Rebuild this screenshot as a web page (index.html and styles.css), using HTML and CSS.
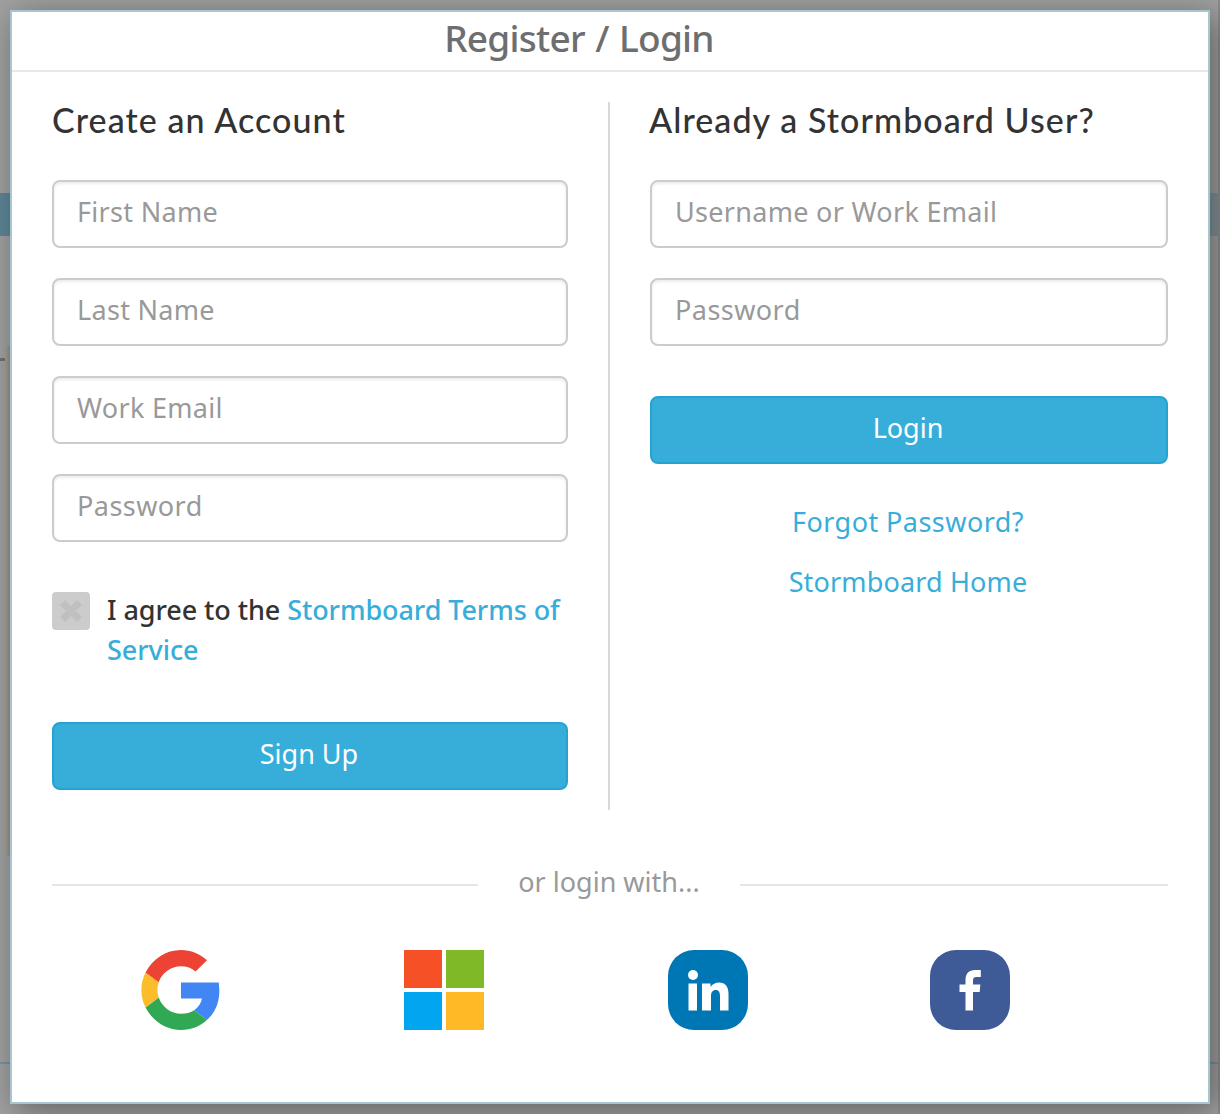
FILE: index.html
```html
<!DOCTYPE html>
<html lang="en">
<head>
<meta charset="utf-8">
<title>Register / Login</title>
<link rel="stylesheet" href="styles.css">
</head>
<body>
<div class="backdrop" aria-hidden="true">
  <div class="backdrop-top"></div>
  <div class="backdrop-bar"></div>
  <div class="backdrop-main"><div class="backdrop-mark"></div></div>
  <div class="backdrop-foot"></div>
</div>
<div class="dialog" role="dialog">
  <header class="dialog-header"><h1 class="dialog-title">Register / Login</h1></header>
  <div class="columns">
    <form class="column register">
      <h2 class="heading heading-register">Create an Account</h2>
      <div class="fields">
        <input class="field first" type="text" placeholder="First Name">
        <input class="field last" type="text" placeholder="Last Name">
        <input class="field email" type="text" placeholder="Work Email">
        <input class="field" type="password" placeholder="Password">
      </div>
      <div class="agree">
        <span class="checkbox"><svg width="24" height="24" viewBox="0 0 24 24"><path d="M3.500 3.500 20.500 20.500M20.500 3.500 3.500 20.500" stroke="#c0c0c0" stroke-width="7"/></svg></span>
        <p class="terms"><span class="terms-lead">I agree to the</span> <a class="link">Stormboard Terms of</a><br><a class="link service">Service</a></p>
      </div>
      <button class="button" type="button">Sign Up</button>
    </form>
    <form class="column login">
      <h2 class="heading heading-login">Already a Stormboard User?</h2>
      <div class="fields">
        <input class="field user" type="text" placeholder="Username or Work Email">
        <input class="field" type="password" placeholder="Password">
      </div>
      <button class="button button-login" type="button">Login</button>
      <nav class="links"><a class="link forgot">Forgot Password?</a><a class="link home">Stormboard Home</a></nav>
    </form>
  </div>
  <div class="separator"><span class="separator-text">or login with...</span></div>
  <div class="providers">
    <svg width="80" height="80" viewBox="1 0 80 80" aria-label="Google">
      <path fill="#4285f4" d="M41 32.500H78.700C80.500 44.500 79 59.500 66.900 70L54.200 60.200C58.500 57.300 61 53.500 62 48.600H41Z"/>
      <path fill="#31a853" d="M66.900 70C60 76.500 51 80 41 80C25.800 80 12.600 71 5.500 57.500L18.700 47.500C22 57 31 63.800 41 63.800C46 63.800 50.700 62.500 54.200 60.200Z"/>
      <path fill="#fbbd2c" d="M5.500 57.500C0 46.500 0 33.500 5.500 22.500L18.700 32.300C17 37.500 17 42.500 18.700 47.500Z"/>
      <path fill="#ec4335" d="M5.500 22.500C12.600 9 25.800 0 41 0C51 0 60 4 67 10.200L55.600 21.600C51.800 18 46.500 16.200 41 16.200C31 16.200 22 22.500 18.700 32.300Z"/>
    </svg>
    <svg width="80" height="80" viewBox="0 0 80 80" aria-label="Microsoft">
      <path fill="#f65026" d="M0 0H38V38H0Z"/><path fill="#80b928" d="M42 0H80V38H42Z"/>
      <path fill="#02a5ef" d="M0 42H38V80H0Z"/><path fill="#ffb927" d="M42 42H80V80H42Z"/>
    </svg>
    <svg width="80" height="80" viewBox="0 0 80 80" aria-label="LinkedIn">
      <rect width="80" height="80" rx="26" fill="#0077b5"/>
      <circle cx="25" cy="25" r="5" fill="#fff"/>
      <path fill="#fff" d="M20.500 33.500H29V60.500H20.500ZM34 33.500H42.500V37C44.500 34 47.500 32.500 51 32.500C57.500 32.500 60.500 37 60.500 43.500V60.500H52V46.500C52 42.500 51 40 47.800 40C44.500 40 43 42.500 43 46V60.500H34Z"/>
    </svg>
    <svg width="80" height="80" viewBox="0 0 80 80" aria-label="Facebook">
      <rect width="80" height="80" rx="26" fill="#3e5b98"/>
      <path fill="#fff" d="M35.500 60.500V42H29.500V34.500H35.500V30C35.500 23.500 39 20 45 20H50.800V27H46.500C44 27 43 28 43 30.500V34.500H50.300L49.700 42H43V60.500Z"/>
    </svg>
  </div>
</div>
</body>
</html>
```
FILE: styles.css
```css
* { box-sizing: border-box; }
body {
  margin: 0;
  height: 1114px;
  overflow: hidden;
  position: relative;
  font-family: "Noto Sans", sans-serif;
  font-size: 27px;
  color: #333;
}
.backdrop {
  height: 1114px;
  background: #a0a0a0;
  border-right: 2px solid #8c8c8c;
  display: flex;
  flex-direction: column;
}
.backdrop-top { height: 193px; }
.backdrop-bar { height: 43px; background: linear-gradient(90deg, #5d8696 50%, #82939a 50%); }
.backdrop-main {
  height: 826px;
  padding-top: 122px;
  background: linear-gradient(90deg, transparent 5px, #9b9484 9px, #9b9484 12px, transparent 13px) 0 110px / 100% 510px no-repeat;
}
.backdrop-mark { width: 5px; height: 3px; background: #6f6f6f; }
.backdrop-foot { flex: 1; border-top: 2px solid #7494a1; }
.dialog {
  position: absolute;
  inset: 10px;
  border: 2px solid #a8c6d1;
  background: #fff;
  box-shadow: 6px 6px 30px rgba(0, 0, 0, .4);
}
.dialog-header {
  height: 60px;
  padding-right: 62px;
  border-bottom: 2px solid #e8e8e8;
  text-align: center;
}
.dialog-title {
  margin: 0;
  font-size: 37px;
  line-height: 52px;
  font-weight: 500;
  letter-spacing: -.75px;
  word-spacing: 1.5px;
  color: #6d6e70;
}
.columns { display: flex; margin: 30px 40px 0; height: 708px; }
.column { display: flex; flex-direction: column; }
.register { width: 558px; padding-right: 40px; border-right: 2px solid #d3d9dd; }
.login { width: 558px; padding-left: 40px; }
.heading {
  margin: -1px 0 41px;
  height: 38px;
  font-family: Lato, sans-serif;
  font-size: 34px;
  line-height: 38px;
  font-weight: 500;
  letter-spacing: 1.08px;
  white-space: nowrap;
}
.heading-login { text-indent: -1px; }
.fields { display: grid; gap: 30px; }
.field {
  width: 100%;
  height: 68px;
  padding: 0 23px 6px;
  border: 2px solid #ccc;
  border-radius: 8px;
  background: #fff;
  box-shadow: inset 0 2px 3px rgba(0, 0, 0, .08);
  font: inherit;
  letter-spacing: .3px;
}
.field[type="password"] { letter-spacing: .45px; }
.field::placeholder { color: #999; opacity: 1; }
.agree { display: flex; gap: 17px; height: 88px; margin: 50px 0 42px; }
.checkbox {
  display: grid;
  place-items: center;
  width: 38px;
  height: 38px;
  border-radius: 4px;
  background: #ccc;
}
.terms { margin: -2px 0 0; line-height: 40px; font-weight: 500; letter-spacing: -.08px; white-space: nowrap; }
.link { color: #37aeda; }
.button {
  height: 68px;
  padding: 0 2px 6px 0;
  border: 2px solid #24a3d3;
  border-radius: 8px;
  background: #37aeda;
  color: #fff;
  font: inherit;
}
.button-login { margin-top: 50px; }
.links { display: grid; margin-top: 28px; padding-right: 2px; text-align: center; line-height: 60px; }
.forgot { letter-spacing: .45px; }
.home { letter-spacing: .15px; }
.separator {
  display: flex;
  align-items: center;
  height: 40px;
  margin: 55px 40px 0;
  color: #999;
}
.separator::before, .separator::after { content: ""; height: 2px; background: #e6e6e6; }
.separator::before { width: 426px; }
.separator::after { width: 428px; }
.separator-text { width: 262px; padding-bottom: 6px; line-height: 32px; text-align: center; white-space: nowrap; }
.providers { display: grid; grid-template-columns: 262px 264px 264px 260px; margin: 45px 0 0 38px; justify-items: center; }
```
